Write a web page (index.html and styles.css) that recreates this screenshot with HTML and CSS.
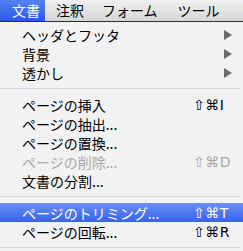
FILE: index.html
```html
<!DOCTYPE html>
<html lang="ja">
<head>
    <meta charset="UTF-8">
    <meta name="viewport" content="width=device-width, initial-scale=1.0">
    <title>文書メニュー</title>
    <link rel="stylesheet" href="styles.css">
</head>
<body>
    <!-- メニューバー -->
    <div class="menubar">
        <span class="menubar-item active">文書</span>
        <span class="menubar-item">注釈</span>
        <span class="menubar-item">フォーム</span>
        <span class="menubar-item tools">ツール</span>
        <span class="menubar-item advanced">アドバンスト</span>
    </div>

    <!-- プルダウンメニュー -->
    <div class="menu">
        <div class="menu-item">
            <span class="label">ヘッダとフッタ</span>
            <span class="arrow"></span>
        </div>
        <div class="menu-item">
            <span class="label">背景</span>
            <span class="arrow"></span>
        </div>
        <div class="menu-item">
            <span class="label">透かし</span>
            <span class="arrow"></span>
        </div>
        <div class="separator"></div>
        <div class="menu-item">
            <span class="label">ページの挿入</span>
            <span class="shortcut">⇧⌘I</span>
        </div>
        <div class="menu-item">
            <span class="label">ページの抽出...</span>
        </div>
        <div class="menu-item">
            <span class="label">ページの置換...</span>
        </div>
        <div class="menu-item disabled">
            <span class="label">ページの削除...</span>
            <span class="shortcut">⇧⌘D</span>
        </div>
        <div class="menu-item">
            <span class="label">文書の分割...</span>
        </div>
        <div class="separator"></div>
        <div class="menu-item selected">
            <span class="label">ページのトリミング...</span>
            <span class="shortcut">⇧⌘T</span>
        </div>
        <div class="menu-item">
            <span class="label">ページの回転...</span>
            <span class="shortcut">⇧⌘R</span>
        </div>
        <div class="separator"></div>
    </div>
</body>
</html>
```

FILE: styles.css
```css
body {
    margin: 0;
    width: 243px;
    height: 251px;
    overflow: hidden;
    font-family: 'Noto Sans CJK JP', sans-serif;
    font-size: 14px;
    color: #000000;
    background-color: #f2f2f2;
}
.menubar {
    display: flex;
    height: 21px;
    line-height: 21px;
    white-space: nowrap;
    overflow: hidden;
    background: linear-gradient(#f1f1f1, #d6d6d6);
    border-bottom: 1px solid #2e2e2e;
}
.menubar-item {
    flex-shrink: 0;
    padding: 0 9px;
}
.menubar-item.active {
    padding: 0 5px 0 12px;
    margin-right: 2px;
    color: #ffffff;
    background: linear-gradient(#5482f3, #2a59e6);
}
.menubar-item.tools {
    margin-left: 2px;
}
.menubar-item.advanced {
    margin-left: 4px;
}
.menu {
    padding-top: 3px;
    background-color: #f2f2f2;
}
.menu-item {
    display: flex;
    align-items: center;
    height: 19px;
    padding-left: 22px;
    white-space: nowrap;
}
.menu-item .label {
    flex: 1;
}
.menu-item.disabled {
    color: #a9a9a9;
}
.menu-item.selected {
    color: #ffffff;
    background: linear-gradient(#6a8ef5, #3763ea);
}
.shortcut {
    width: 50px;
    font-family: 'DejaVu Sans', sans-serif;
    font-size: 14px;
    letter-spacing: 0.5px;
}
.arrow {
    width: 0;
    height: 0;
    margin-right: 11px;
    border-left: 8px solid #6b6b6b;
    border-top: 5px solid transparent;
    border-bottom: 5px solid transparent;
}
.separator {
    height: 1px;
    margin: 6px 2px 6px 0;
    background-color: #d9d9d9;
}
```
